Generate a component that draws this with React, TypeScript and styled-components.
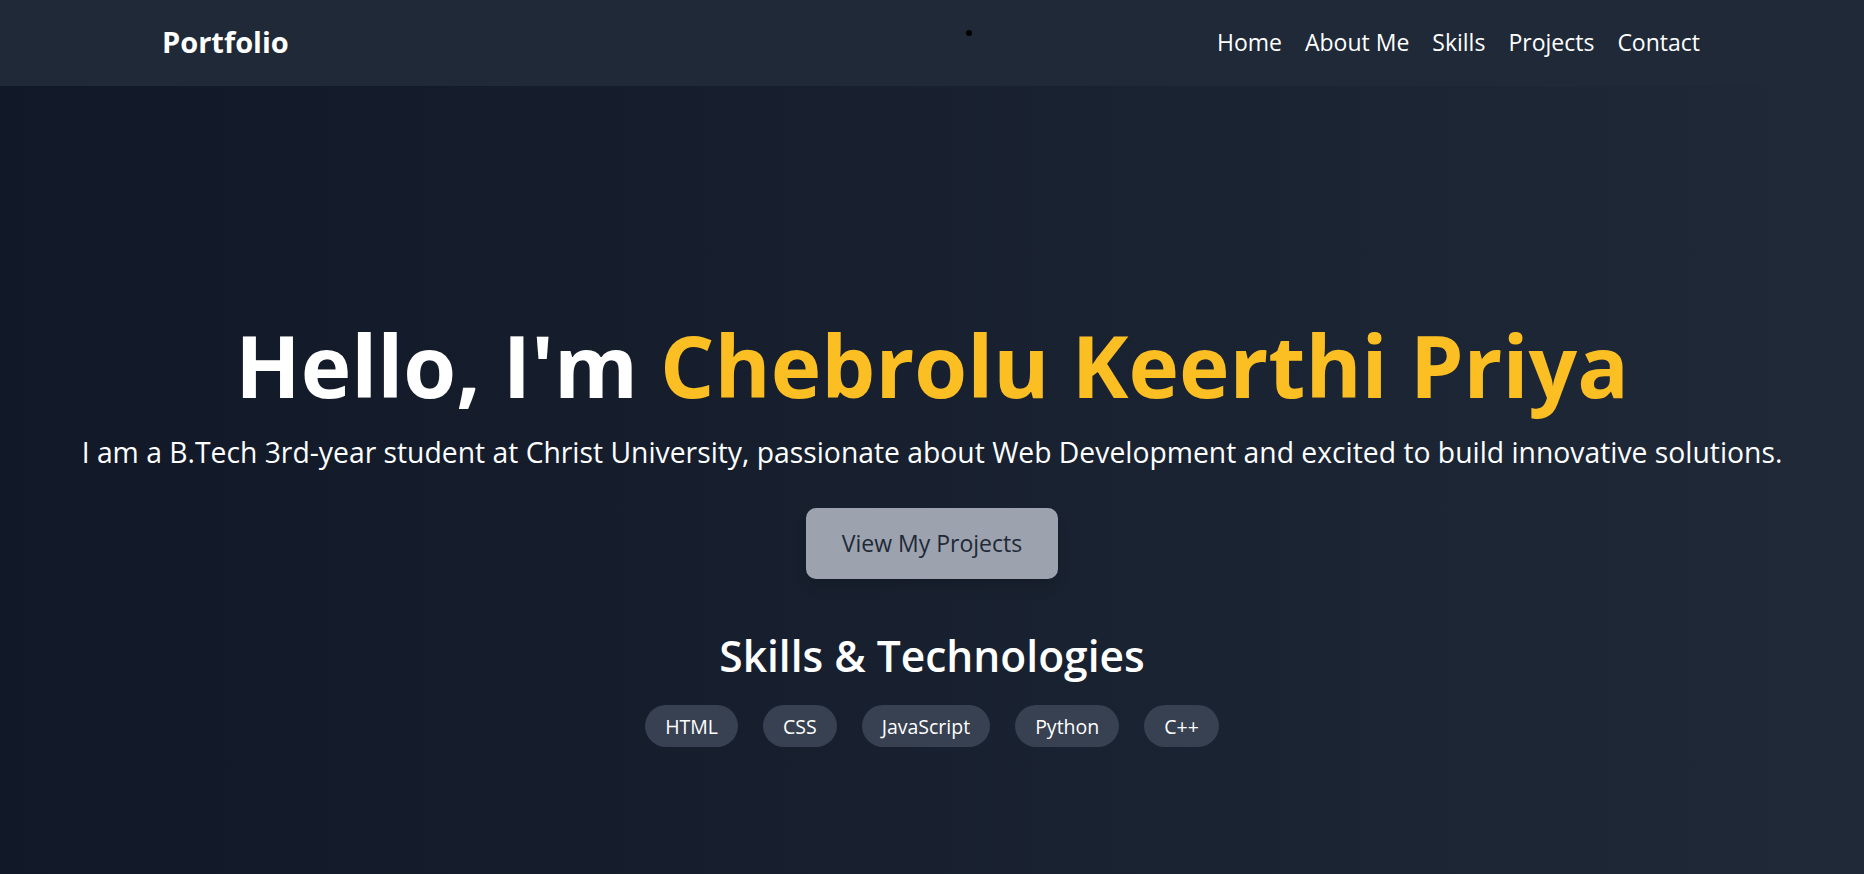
import React from "react";
import styled, { createGlobalStyle } from "styled-components";

const GlobalStyle = createGlobalStyle`
  html, body {
    margin: 0;
    padding: 0;
  }
  body {
    font-family: "Open Sans", "Noto Sans", "Liberation Sans", sans-serif;
    background: #111827;
    color: #ffffff;
  }
  * { box-sizing: border-box; }
`;

const NavBar = styled.nav`
  position: relative;
  height: 86px;
  background: #1f2937;
`;

const NavInner = styled.div`
  width: 1536px;
  height: 100%;
  margin: 0 auto;
  padding-bottom: 2px;
  display: flex;
  align-items: center;
  justify-content: space-between;
`;

const Brand = styled.div`
  margin-left: -2px;
  font-size: 29px;
  font-weight: 700;
  line-height: 36px;
  color: #ffffff;
`;

const NavLinks = styled.ul`
  display: flex;
  gap: 23px;
  list-style: none;
  margin: 0;
  padding: 0;
`;

const NavLink = styled.a`
  font-size: 23px;
  line-height: 30px;
  color: #ffffff;
  text-decoration: none;
`;

const StrayDot = styled.span`
  position: absolute;
  left: 966px;
  top: 30px;
  width: 6px;
  height: 6px;
  border-radius: 50%;
  background: #000000;
`;

const Hero = styled.section`
  min-height: 874px;
  padding-top: 236px;
  display: flex;
  flex-direction: column;
  align-items: center;
  text-align: center;
  background: linear-gradient(to right, #111827, #1f2937);
`;

const Title = styled.h1`
  margin: 0;
  font-size: 85.5px;
  line-height: 86px;
  font-weight: 700;
  color: #ffffff;
`;

const Highlight = styled.span`
  color: #fbbf24;
`;

const Subtitle = styled.p`
  margin: 24px 0 0;
  font-size: 28.3px;
  line-height: 40px;
  color: #ffffff;
`;

const PrimaryButton = styled.button`
  margin-top: 36px;
  height: 71px;
  padding: 0 36px;
  border: none;
  border-radius: 10px;
  background: #9ca3af;
  color: #1f2937;
  font-family: inherit;
  font-size: 23px;
  line-height: 35px;
  box-shadow: 0 10px 15px -3px rgba(0, 0, 0, 0.1), 0 4px 6px -4px rgba(0, 0, 0, 0.1);
  cursor: pointer;
`;

const SectionTitle = styled.h2`
  margin: 52px 0 0;
  font-size: 42.5px;
  line-height: 50px;
  font-weight: 600;
  color: #ffffff;
`;

const PillRow = styled.div`
  margin-top: 24px;
  display: flex;
  gap: 25px;
  justify-content: center;
`;

const Pill = styled.span`
  height: 42px;
  padding: 0 20px;
  display: inline-flex;
  align-items: center;
  border-radius: 9999px;
  background: #374151;
  color: #ffffff;
  font-size: 19.5px;
`;

const links = ["Home", "About Me", "Skills", "Projects", "Contact"];
const skills = ["HTML", "CSS", "JavaScript", "Python", "C++"];

export default function App() {
  return (
    <>
      <GlobalStyle />
      <NavBar>
        <NavInner>
          <Brand>Portfolio</Brand>
          <NavLinks>
            {links.map((l) => (
              <li key={l}>
                <NavLink href="#">{l}</NavLink>
              </li>
            ))}
          </NavLinks>
        </NavInner>
        <StrayDot />
      </NavBar>
      <Hero>
        <Title>
          Hello, I'm <Highlight>Chebrolu Keerthi Priya</Highlight>
        </Title>
        <Subtitle>
          I am a B.Tech 3rd-year student at Christ University, passionate about Web Development and excited to build innovative solutions.
        </Subtitle>
        <PrimaryButton>View My Projects</PrimaryButton>
        <SectionTitle>Skills &amp; Technologies</SectionTitle>
        <PillRow>
          {skills.map((s) => (
            <Pill key={s}>{s}</Pill>
          ))}
        </PillRow>
      </Hero>
    </>
  );
}
